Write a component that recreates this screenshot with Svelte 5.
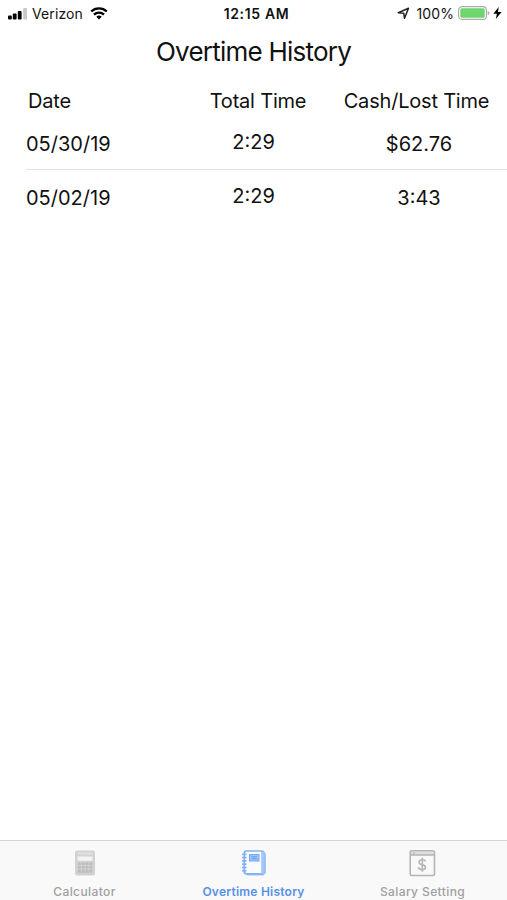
<script>
  const rows = [
    { date: '05/30/19', total: '2:29', value: '$62.76' },
    { date: '05/02/19', total: '2:29', value: '3:43' }
  ];
  const keys = [0, 1, 2, 3];
</script>

<div class="screen">
  <header class="status">
    <div class="left">
      <svg width="20" height="12" viewBox="0 0 20 12">
        <rect x="0" y="7.5" width="3.8" height="4" rx="1" />
        <rect x="4.800" y="5.5" width="3.8" height="6" rx="1" />
        <rect x="9.800" y="3" width="3.8" height="8.5" rx="1" />
        <rect x="15.2" y="0" width="3.8" height="11.5" rx="1" fill="#c9c9c9" />
      </svg>
      <span class="carrier">Verizon</span>
      <svg class="wifi" width="18" height="13" viewBox="0 0 18 13" fill="none" stroke="#000" stroke-width="2.3">
        <path d="M1.200 4.500C5.500.400 12.500.400 16.800 4.500" />
        <path d="M4 7.700C6.800 5 11.200 5 14 7.700" />
        <path d="M6.300 9.700Q9 7.300 11.700 9.700L9 12.400Z" fill="#000" stroke="none" />
      </svg>
    </div>
    <div class="clock">12:15 AM</div>
    <div class="right">
      <svg width="13" height="13" viewBox="0 0 13 13">
        <path d="M1.300 5.800L11.500 1.200L7.500 11.300L6.800 6.300Z" fill="none" stroke="#222" stroke-width="1.500" stroke-linejoin="round" />
      </svg>
      <span class="percent">100%</span>
      <svg class="battery" width="32" height="14" viewBox="0 0 32 14">
        <rect x=".6" y=".6" width="27.800" height="12.800" rx="3.500" fill="#fff" stroke="#aaa" stroke-width="1.100" />
        <rect x="2.300" y="2.300" width="24.400" height="9.400" rx="1.500" fill="#6ed66c" />
        <path d="M29.700 4.900Q31.400 5.400 31.400 7T29.700 9.100Z" fill="#aaa" />
      </svg>
      <svg class="bolt" width="9" height="12" viewBox="0 0 9 12"><path d="M5.700 0L.4 6.800H3.900L2.800 12L8.600 4.900H5Z" /></svg>
    </div>
  </header>

  <h1><span>Overtime History</span></h1>

  <main>
    <div class="grid heading">
      <span>Date</span><span class="total">Total Time</span><span class="value">Cash/Lost Time</span>
    </div>
    {#each rows as row}
      <div class="grid row">
        <span>{row.date}</span><span class="total">{row.total}</span><span class="value">{row.value}</span>
      </div>
    {/each}
  </main>

  <nav>
    <div class="tab">
      <svg width="30" height="30" viewBox="0 0 30 30">
        <rect x="5" y="2.500" width="20" height="25" rx="2" fill="#d2d2d2" />
        <rect x="7.500" y="4.300" width="15" height="2.500" fill="#dedede" />
        <rect x="7.500" y="8.500" width="15" height="4.300" fill="#f3f3f3" />
        {#each [0, 1, 2] as y}
          {#each keys as x}
            <rect x={8 + x * 3.8} y={14.5 + y * 3.5} width="2.800" height="2.500" fill="#bcbcbc" />
          {/each}
        {/each}
        <path d="M7.500 24.700H22.500" stroke="#c0c0c0" />
      </svg>
      <span class="calc-label">Calculator</span>
    </div>
    <div class="tab active">
      <svg width="30" height="30" viewBox="0 0 30 30" fill="none">
        <path d="M24.500 3L27 5.500V25L24.500 27.500H8V25.500" fill="#a4c7f8" />
        <rect x="5.300" y="3" width="19.300" height="22.800" rx="2" fill="#f8fbff" stroke="#83b1f3" stroke-width="1.700" />
        <path d="M23.700 4V25.500" stroke="#a4c7f8" stroke-width="3" />
        <rect x="10.500" y="6.500" width="9.500" height="6.500" fill="#a0c4f8" stroke="#75a8f0" />
        <path d="M12.500 8.800H18M12.500 10.800H18" stroke="#649aeb" />
        {#each [0, 1, 2, 3, 4, 5] as i}
          <path d="M3 {6.3 + i * 3.3}H7.500" stroke="#83b1f3" stroke-width="1.700" />
        {/each}
      </svg>
      <span class="history-label">Overtime History</span>
    </div>
    <div class="tab salary">
      <svg width="30" height="30" viewBox="0 0 30 30" fill="none" stroke="#b5b5b5">
        <path d="M3.500 3.500H26.500V7.200H3.500Z" fill="#dedede" stroke="none" />
        <rect x="3.200" y="2.700" width="24.300" height="24.800" rx="1.700" stroke-width="1.600" />
        <path d="M3.500 7H27M7 4V6" stroke-width="1.300" />
        <path d="M18.600 13.400Q18 11.700 15.300 11.700C11.100 11.700 11 15.900 14.800 16.600C19.800 17.500 19.200 21.700 15.300 21.700Q12 21.700 11.400 19.300M15.300 9.700V23.700" stroke-width="1.600" />
      </svg>
      <span class="salary-label">Salary Setting</span>
    </div>
  </nav>
</div>

<style>
  :global(body) { margin: 0; background: #fff; }
  .screen { height: 900px; display: flex; flex-direction: column; overflow: hidden; background: #fff; color: #111; font-family: Inter, "Liberation Sans", sans-serif; }
  svg { display: block; flex: none; }
  span { white-space: nowrap; }
  .status { height: 28px; display: grid; grid-template-columns: 1fr 100px 1fr; align-items: center; font-size: 14px; line-height: 28px; }
  .left, .right { display: flex; align-items: center; }
  .left { padding-left: 8px; }
  .carrier { margin-left: 4px; letter-spacing: .1px; }
  .wifi { margin-left: 7px; margin-top: -2px; }
  .clock { text-align: center; font-weight: 600; padding-left: 6px; letter-spacing: .65px; white-space: nowrap; }
  .right { justify-content: flex-end; padding-right: 5px; }
  .right > svg { margin-top: -2px; }
  .percent { margin-left: 6px; letter-spacing: .1px; }
  .battery { margin-left: 4px; }
  .bolt { margin-left: 3px; }
  h1 { margin: 0; height: 48px; line-height: 48px; text-align: center; font-size: 26px; font-weight: 400; letter-spacing: -.77px; }
  main { flex: 1; }
  .grid { display: grid; grid-template-columns: 169px 117px 1fr; font-size: 20px; margin-left: 26px; }
  .heading { height: 40px; line-height: 50px; letter-spacing: -.2px; }
  .heading > :first-child { padding-left: 2px; }
  .total, .value { text-align: center; }
  .heading .total { padding-left: 9px; }
  .value { margin-left: 14px; margin-right: -5px; }
  .heading .value { padding-right: 5px; }
  .row { height: 53px; line-height: 57px; }
  .row .total { line-height: 53px; }
  .row:nth-child(2) { border-bottom: 1px solid #e2e2e2; }
  nav { height: 60px; box-sizing: border-box; border-top: 1px solid #d4d4d4; background: #f9f9f9; display: grid; grid-template-columns: repeat(3, 1fr); }
  .tab { display: flex; flex-direction: column; align-items: center; padding-top: 7px; color: #a0a0a0; font-size: 12px; font-weight: 500; line-height: 17px; }
  .tab span { margin-top: 5px; letter-spacing: .4px; }
  .tab.active { color: #5790e9; font-weight: 600; }
  .tab.active span { letter-spacing: .23px; }
  .salary svg { margin-right: 2px; }
</style>
